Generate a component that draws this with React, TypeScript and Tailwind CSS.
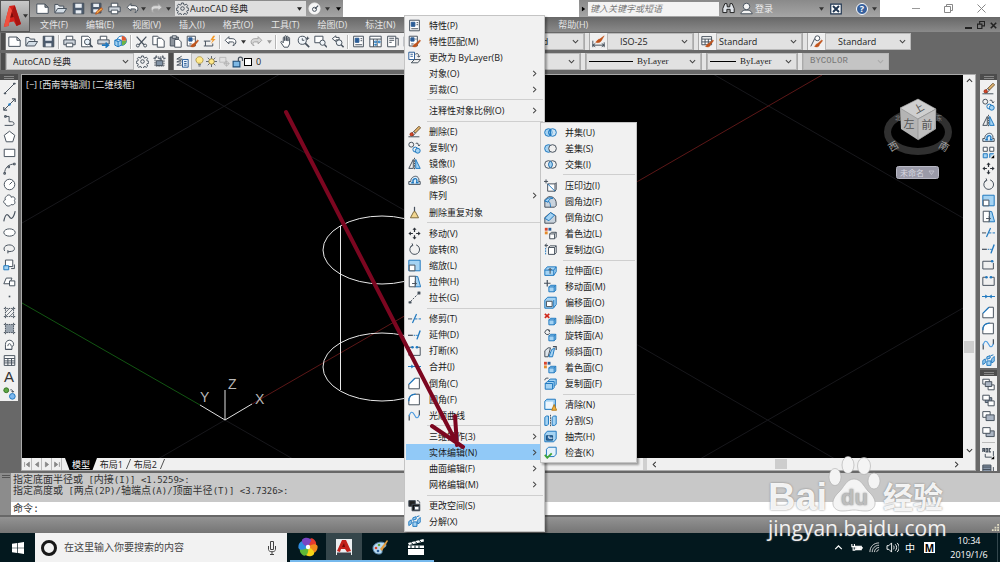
import { Fragment, type ReactNode } from "react";
import { clsx } from "clsx";

const BLUE = "#1f78bf";
const SKY = "#a5d3f3";
const INK = "#46505c";
const RUST = "#c1541c";

const solid = (
    <path
        d="M6 8.5 8 6.5h6.5v6l-2 2H6zM6 8.5h6.5v6M12.5 8.5l2-2"
        fill={SKY}
        stroke={BLUE}
    />
);

const page = (
    <>
        <path d="M2 1.5h12v13H2z" fill="#fff" />
        <path d="M4 4h4.500v5H4z" fill="#2b5d96" stroke="#2b5d96" />
        <path d="M10.500 4.500h2M10.500 7h2M4 12h8.500" />
    </>
);

const brush = (
    <path
        d="m14.500 6-5 4.500c-2 0-2 2-4 3.500 3 1.500 6 .5 6-2L15.500 7z"
        fill={RUST}
        stroke={RUST}
        strokeWidth="0.6"
    />
);

const icons: Record<string, ReactNode> = {
    newFile: <path d="M1 2.500h10l4 4v7.500H1zM11 2.500v4h4" fill="#fff" />,
    open: (
        <>
            <path d="M1 13V3h4l1.500 2H12v3" fill="#e8edf2" />
            <path d="M1 13.500 4.500 8H15.500L12 13.500z" fill="#d3dde6" />
        </>
    ),
    save: (
        <>
            <path d="M1.500 1.500h13v13h-13z" fill="#4c5b6e" />
            <path d="M4 2h8v5H4zM4.500 10h7v4h-7z" fill="#e9eef4" stroke="none" />
        </>
    ),
    saveAs: (
        <>
            <path d="M1.500 1.500h12v12h-12z" fill="#4c5b6e" />
            <path d="M4 2h7v4H4zM4 9h6v4H4z" fill="#e9eef4" stroke="none" />
            <path d="m7 15 1-3 6-5 1.500 2-6 5z" fill="#f2b24b" stroke={RUST} />
        </>
    ),
    print: (
        <>
            <path d="M4 6V1.500h8V6" fill="#fff" />
            <path d="M1 6h14v6H1z" fill="#cfd5dc" />
            <path d="M4 10h8v4.500H4z" fill="#fff" />
        </>
    ),
    preview: (
        <>
            <path d="M2 1.500h8l3 3v10H2z" fill="#fff" />
            <circle cx="9" cy="8.500" r="3.500" fill="#e9f3fb" />
            <path d="m11.500 11 4 4" strokeWidth="1.8" />
        </>
    ),
    publish: (
        <>
            <path d="M4 6V1.500h8V6" fill="#fff" />
            <path d="M1 6h14v5H1z" fill="#cfd5dc" />
            <path d="M6 12.500h7M10.500 9.500l3.500 3-3.500 3" stroke={BLUE} strokeWidth="2" />
        </>
    ),
    globe: (
        <>
            <circle cx="9.500" cy="7" r="5.800" fill="#fff" stroke={BLUE} />
            <path d="M9.500 7V1.200A5.800 5.800 0 0 1 15.300 7z" fill="#e05a33" stroke="none" />
            <path d="M9.500 7h5.800a5.800 5.800 0 0 1-5.800 5.800z" fill="#6bb445" stroke="none" />
            <path d="M1 6.500 5 5l4 1.500v6L5 14.500l-4-2zM1 6.500 5 8l4-1.500M5 8v6.500" fill={SKY} stroke={BLUE} />
        </>
    ),
    cut: (
        <>
            <path d="M2 2l9 10M14 2 5 12" strokeWidth="1.5" />
            <circle cx="3.500" cy="13" r="1.800" />
            <circle cx="12.500" cy="13" r="1.800" />
        </>
    ),
    copyDoc: (
        <>
            <path d="M1 1.500h6l2.500 2.500v8H1z" fill="#fff" />
            <path d="M6.500 4h5L15 7v8H6.500z" fill="#fff" />
        </>
    ),
    paste: (
        <>
            <path d="M1.500 2.500h10v11h-10z" fill="#8d949d" />
            <path d="M4 1h5v3H4z" fill="#d9dde1" />
            <path d="M7 5.500h5l3 3v6.500H7z" fill="#fff" />
        </>
    ),
    matchProps: (
        <>
            <path d="M1.500 1.500h10v12h-10z" fill="#fff" />
            <path d="M3.500 3.500h4v4h-4z" fill="#2b5d96" stroke="#2b5d96" />
            <path d="M9 5h1.500M4 11h3" />
            {brush}
        </>
    ),
    blockEdit: (
        <>
            <path d="M1 7.500h8M3 7.500v6h9v-3M1 13.500h2" />
            <path d="M12.500 1 9 6.500h3L9.500 11 15.500 5h-3L15 1z" fill="#f39a2b" stroke="none" />
        </>
    ),
    undo: <path d="m6 2-4.500 4.500L6 11V8.500h4.500c2.500 0 2.500 3 .5 4.500 5-1 5-8.500-1-8.500H6z" fill="#fff" />,
    redo: (
        <path
            d="m10 2 4.500 4.500L10 11V8.500H5.500c-2.500 0-2.500 3-.5 4.500C0 12 0 4.500 6 4.500h4z"
            fill="#d8d8d8"
            stroke="#a3a3a3"
        />
    ),
    pan: (
        <path
            d="M5 15 1 9c0-1.500 1.500-1.500 3 .5V3.500c0-1.500 1.800-1.500 1.800 0V7 2c0-1.500 2-1.500 2 0v5-4.500c0-1.500 2-1.500 2 0v5-3.500c0-1.500 2-1.500 2 0V11l-2 4z"
            fill="#fff"
        />
    ),
    zoomLive: (
        <>
            <circle cx="6.500" cy="6.500" r="5" fill="#f2f6fa" />
            <path d="m10 10 5 5" strokeWidth="2" />
            <path d="M6.500 4v2.500H9M13 2v4M11 4h4" />
        </>
    ),
    zoomWindow: (
        <>
            <path d="M1 1.500h10v8H1z" fill="#fff" />
            <circle cx="10.500" cy="9.500" r="3.200" fill="#f2f6fa" />
            <path d="m13 12 3 3" strokeWidth="1.800" />
        </>
    ),
    zoomPrev: (
        <>
            <path d="M6 1 1.500 4.500 6 8V6h4V3H6z" fill="#fff" />
            <circle cx="10" cy="9.500" r="3.500" fill="#f2f6fa" />
            <path d="m12.500 12 3 3" strokeWidth="1.800" />
        </>
    ),
    properties: page,
    designCenter: (
        <>
            <path d="M1 1.500h14v13H1zM1 5h14M5.500 5v9.500M10 5v9.500" fill="#fff" />
            <path d="M7 7.500h2v2H7zM11.500 7.500h2v2h-2zM7 11.500h2v1H7z" stroke={BLUE} />
        </>
    ),
    palettes: (
        <>
            <path d="M2 1.500h10v13H2zM12 4l3 0v9" fill="#fff" />
            <path d="M4 4h6M4 6.500h6M4 9h3" />
        </>
    ),
    gear: (
        <>
            <circle cx="8" cy="8" r="2.200" />
            <path d="M6.800 1.200h2.400l.4 2 1.300.6 1.800-1.200 1.600 1.700-1.100 1.700.5 1.300 2.100.5v2.300l-2 .4-.6 1.400 1.200 1.700-1.700 1.600-1.700-1.100-1.400.5-.5 2H6.900l-.5-2-1.300-.5-1.700 1.100-1.700-1.600 1.100-1.700-.6-1.400-1.900-.4V7.800l2-.5.5-1.300-1.100-1.700 1.600-1.700 1.800 1.200 1.300-.6z" />
        </>
    ),
    workspace: (
        <>
            <path d="M2.500 2.500h11v11h-11z" strokeDasharray="2 1" />
            <path d="M4 7h8v6H4zM6 4h4v3" fill="#8394a6" />
            <path d="M.5 4h3M4 .5v3M12 .5v3M13 4h2.500" />
        </>
    ),
    layers: (
        <>
            <path d="M7 1.500 1 5h7M7 6 1 8.500h6M6 10l-5 2.500h6" />
            <path d="M8 5.500h7V15H8zM10 8h3M10 10.500h3M10 12.500h3" fill="#e4eefa" stroke="#2b5d96" />
        </>
    ),
    bulb: (
        <>
            <path d="M5.500 10.500C0 6 4 1 8 1s8 5 2.500 9.500z" fill="#ffe98a" stroke="#a98f3a" />
            <path d="M6 12.500h4M6.500 14.500h3" />
        </>
    ),
    sun: (
        <>
            <path d="M8 0v16M0 8h16M2.500 2.500l11 11M13.500 2.500l-11 11" />
            <circle cx="8" cy="8" r="4" fill="#ffe98a" stroke="#8d7a37" />
        </>
    ),
    vpFreeze: (
        <g stroke="#b4b4b4">
            <path d="M1 2h9v7H1z" />
            <circle cx="11" cy="11" r="3" />
            <path d="M11 6.500v9M6.500 11h9" />
        </g>
    ),
    unlock: (
        <>
            <path d="M1.500 7h9v7.500h-9z" fill="#7db8e4" stroke="#1d4e79" strokeWidth="1.500" />
            <path d="M8.500 7V4c0-3.500 5.500-3.500 5.500 0v2.500" strokeWidth="1.600" />
        </>
    ),
    dimStyle: (
        <>
            <path d="M1 7v8M15 9v6M1 12.500h14M4 10.500l-3 2 3 2M12 10.500l3 2-3 2" />
            <path d="M15 1 9.500 5c-2 0-3 2-5 4 3 1 6 0 7-2z" fill={RUST} stroke={RUST} strokeWidth="0.6" />
        </>
    ),
    tableStyle: (
        <>
            <path d="M1 2h12v10H1zM1 5h12M1 8.500h12M5 5v7M9 5v7" fill="#fff" />
            {brush}
        </>
    ),
    leaderStyle: (
        <>
            <path d="M1 14 6 4" />
            <circle cx="9" cy="4" r="3" fill="#fff" />
            {brush}
        </>
    ),
    toByLayer: (
        <>
            <path d="M1 1.500h7v9H1zM3 4h3M3 6.500h3" fill="#fff" stroke="#2b5d96" />
            <path d="M9 4c3-2 4.500 0 4 3M11.500 6l1.500 1.500L15 6M4 14.500l4-4h7.500l-3.500 4z" />
        </>
    ),
    erase: (
        <>
            <path d="m7 8 6.500-6.500 2 2L9 10z" fill="#e3b56f" stroke="#6f5330" />
            <path d="m7 8-3 3 2 2.500 3-3.500z" fill="#fff" />
            <circle cx="4.500" cy="11.500" r="2" fill="#d9462a" stroke="#9f3218" />
            <path d="M.5 14.500H14" />
        </>
    ),
    copy: (
        <>
            <circle cx="4" cy="4.500" r="3" />
            <circle cx="9" cy="10.500" r="3" stroke={BLUE} />
            <circle cx="12" cy="12" r="3" stroke={BLUE} fill={SKY} />
            <path d="M9.500 3c2-1 4 0 4 3M12 4.500 13.500 6 15 4.500" />
        </>
    ),
    mirror: (
        <>
            <path d="M6.500 3v11H1z" />
            <path d="M9.500 3v11H15z" fill={SKY} stroke={BLUE} />
            <path d="M8 1v14.500" strokeDasharray="2 1" />
        </>
    ),
    offset: (
        <>
            <path d="M1 14v-3.500h2.500c-1-6 9-10 10-2 0 1.500-.5 2-.5 2h2V14z" fill="#dcecf8" />
            <path d="M4 12h2.500c-2-5 4-7 4.500-3 0 1.500-.5 3-.5 3H13" stroke={BLUE} strokeWidth="1.600" />
        </>
    ),
    array: (
        <>
            <path d="M1.500 1.500h5v5h-5zM9.500 1.500h5v5h-5z" stroke={INK} fill="#fff" />
            <path d="M1.500 9.500h5v5h-5zM9.500 14.500v-5h5" stroke={BLUE} fill={SKY} />
            <path d="M11 15h4v-4z" fill="#000" stroke="none" />
        </>
    ),
    dedupe: (
        <>
            <path d="M8 1v6" strokeWidth="1.500" />
            <path d="m7 7-4 7.500h10L9 7z" fill="#f3d791" stroke="#7d6a3c" />
        </>
    ),
    move: (
        <>
            <path d="M8 2v4M8 10v4M2 8h4M10 8h4" stroke="#2c3138" strokeWidth="1.500" />
            <path
                d="M5.500 3.500 8 .500l2.500 3zM5.500 12.500l2.500 3 2.500-3zM3.500 5.500l-3 2.500 3 2.500zM12.500 5.500l3 2.500-3 2.500z"
                fill="#2c3138"
                stroke="none"
            />
        </>
    ),
    rotate: (
        <>
            <path d="M5.500 2.700a6 6 0 1 0 4.500-.400" />
            <path d="m5 .500 1 2.500-3 1.500" />
        </>
    ),
    scale: (
        <>
            <path d="M1 1.500h14v13H1z" fill={SKY} stroke={BLUE} />
            <path d="M1.500 7.500h7v7h-7z" fill="#fff" />
        </>
    ),
    stretch: (
        <>
            <path d="M9 1.500 12 2l3.500 12.500H8z" fill={SKY} stroke={BLUE} />
            <path d="M1.500 1.500H9v13H1.500zM5 10.500h5M8 8.500l2.500 2L8 12.500" fill="#fff" />
        </>
    ),
    lengthen: (
        <>
            <path d="m3 13 9-9" strokeDasharray="2.500 1.500" />
            <path d="M1 13h3v2H1zM12 1h3v3h-3z" fill={INK} strokeWidth="0.5" />
        </>
    ),
    trim: (
        <>
            <path d="M0 8.500h5" />
            <path d="M8.500 8.500H16" stroke={BLUE} strokeDasharray="3 1.500" />
            <path d="m5.500 13.500 5-11" stroke={BLUE} strokeWidth="1.500" />
        </>
    ),
    extend: (
        <>
            <path d="M0 9h6" strokeWidth="1.500" />
            <path d="M7 9h5" stroke={BLUE} strokeDasharray="2 1" />
            <path d="m11 14 4-11" stroke={BLUE} strokeWidth="1.700" />
        </>
    ),
    breakPoint: (
        <>
            <path d="M12 4H1v9.500h13V6" />
            <circle cx="12.500" cy="4" r="1.600" fill={BLUE} stroke="none" />
        </>
    ),
    breakLine: (
        <>
            <path d="M5 4H1v10h14V4h-3" />
            <circle cx="5.500" cy="4" r="1.600" fill={BLUE} stroke="none" />
            <circle cx="11" cy="4" r="1.600" fill={BLUE} stroke="none" />
        </>
    ),
    join: (
        <>
            <path d="M0 8h16" stroke={BLUE} />
            <path d="M4 5.500 7.500 8 4 10.500zM12 5.500 8.500 8l3.500 2.500z" fill={BLUE} stroke="none" />
        </>
    ),
    chamfer: (
        <>
            <path d="M1 14.500V9l7.500-7.500H14v13z" fill="#fff" />
            <path d="M1 9 8.500 1.500" stroke={BLUE} strokeWidth="1.500" />
        </>
    ),
    fillet: (
        <>
            <path d="M1 14.500V10C1 4.500 4 1.500 9.500 1.500H14v13z" fill="#fff" />
            <path d="M1 10C1 4.500 4 1.500 9.500 1.500" stroke={BLUE} strokeWidth="1.500" />
        </>
    ),
    blend: (
        <>
            <path d="M1.500 14V7M14 8V1.500" strokeWidth="1.500" />
            <path d="M1.500 9C3 2 6 3 8 7.500s4 4.500 6-.5" stroke="#4c9be0" strokeWidth="1.400" />
        </>
    ),
    explode: (
        <path
            d="m1 8 3-2v5l-3 2zM6 8.500h5V14H6zM6 3.500l4-1.500v3L6 6.500zM12 6l3-3v6l-3 2zM11 2l3-1"
            fill={SKY}
            stroke={BLUE}
        />
    ),
    changeSpace: (
        <>
            <path d="M1 2h8v7H1z" fill="#222" />
            <path d="M5 6.500h9.500v8H5z" fill="#111" />
            <path d="M8 9h5.500v4.500H8z" fill="#fff" />
            <path d="M11 2c2.500 0 3.500 1 3.500 3.500" />
        </>
    ),
    union: (
        <>
            <circle cx="5.500" cy="8" r="4.700" fill={SKY} stroke={BLUE} />
            <circle cx="10.500" cy="8" r="4.700" fill={SKY} fillOpacity="0.5" stroke={BLUE} />
            <path d="M8 4v8c-3-2-3-6 0-8z" stroke={BLUE} />
        </>
    ),
    subtract: (
        <>
            <circle cx="5.500" cy="8" r="4.700" fill={SKY} stroke={BLUE} />
            <circle cx="10.500" cy="8" r="4.700" fill="#f0f0f0" />
        </>
    ),
    intersect: (
        <>
            <circle cx="5.500" cy="8" r="4.700" />
            <circle cx="10.500" cy="8" r="4.700" />
            <path d="M8 4c3 2 3 6 0 8-3-2-3-6 0-8z" fill={SKY} stroke={BLUE} />
        </>
    ),
    imprint: (
        <>
            <path d="M4.500 6h9v9h-9zM13.500 6 15 4.500V13l-1.500 2" fill="#fff" />
            <path d="m4.500 6 9 9" stroke={BLUE} />
            <path d="M2.500.5v5M0 3h5" />
        </>
    ),
    filletEdge: (
        <>
            <path d="M1 6 4 3c5-3 11 1 11 7v3l-2 2H1z" fill="#c9d3dd" />
            <path d="M1 8c6-3 7 3 7 7" stroke={BLUE} />
            <path d="M1 7c4-4 7-4 10-3-4 0-5 2-6 5z" fill={SKY} stroke={BLUE} />
        </>
    ),
    chamferEdge: (
        <>
            <path d="M1 8 8 2l6.500 4v7l-2 2H1z" fill="#c9d3dd" />
            <path d="m1 9 7-7 5 3-7 7z" fill={SKY} stroke={BLUE} />
        </>
    ),
    colorEdge: (
        <>
            <path d="M1 1h3.500v3.500H1z" fill="#d8432b" stroke="none" />
            <path d="M5.500 1H9v3.500H5.500z" fill="#2b5d96" stroke="none" />
            <path d="M1 5.500h3.500V9H1z" fill="#e38b2c" stroke="none" />
            <path d="M7 8.500 9 6.500h6v6l-2 2H7zM7 8.500h6v6M13 8.500l2-2" fill="#fff" />
        </>
    ),
    copyEdge: (
        <>
            <path d="M5.500 5.500 7.500 3.500H15V12l-2 2H5.500zM5.500 5.500H13V14M13 5.500l2-2" fill="#fff" />
            <path d="M2 6v9" stroke={BLUE} strokeDasharray="2 1" />
            <path d="M1 3h4M3.500 1 1 3l2.500 2" />
        </>
    ),
    extrudeFace: (
        <>
            <path d="M1 7 4 3.500h11v6L12 14H1z" fill={SKY} stroke={BLUE} />
            <path d="M1 7.500h11V14M12 7.500l3-4" stroke={BLUE} />
            <path d="M7.500 12V5.500M5.500 7.500l2-2 2 2" />
        </>
    ),
    moveFace: (
        <>
            {solid}
            <path d="M4 0v8M0 4h8" strokeWidth="1.500" />
        </>
    ),
    offsetFace: (
        <>
            <path d="m1 5 3.500-3.500H15v9L11.500 15H1z" fill={SKY} stroke={BLUE} />
            <path d="M3 6.500h7V13H3z" fill="#fff" />
            <path d="M12 5v9" stroke={BLUE} />
        </>
    ),
    deleteFace: (
        <>
            {solid}
            <path d="m1 1 5.500 5M6.500 1 1 6" stroke="#d0281b" strokeWidth="2" />
        </>
    ),
    rotateFace: (
        <>
            {solid}
            <path d="M6.500 2A3 3 0 1 0 7 5M4.500 1l2.500.500-.500 2.500" />
        </>
    ),
    taperFace: (
        <>
            <path d="M1 14.500V7l4-3.500h3L5 14.500z" fill="#dfe5ea" />
            <path d="m6 14.500 3.500-9L13 4l-2.500 10.500z" fill={SKY} stroke={BLUE} />
            <path d="M11 2h4v4" strokeWidth="1.500" />
        </>
    ),
    colorFace: (
        <>
            {solid}
            <path d="M0 1h3.500v3.500H0z" fill="#d8432b" stroke="none" />
            <path d="M4.500 1H8v3.500H4.500z" fill="#2b5d96" stroke="none" />
            <path d="M0 5.500h3.500V9H0z" fill="#e38b2c" stroke="none" />
        </>
    ),
    copyFace: (
        <>
            <path d="M5 5 7.500 2.500H15V9l-2.500 2.500" fill={SKY} stroke={BLUE} />
            <path d="M1.500 8h9v7h-9zM1.500 8 4 5.500h8.500V13l-2 2" fill={SKY} stroke={BLUE} />
            <path d="M1 4c0-2.500 2-3 4.500-2.500" />
        </>
    ),
    clean: (
        <>
            <path d="M1 4 3.500 1.500H14v10L11.500 14H1z" fill={SKY} stroke={BLUE} />
            <path d="M2 4.500h9V13H2z" fill="#eef6fc" stroke="none" />
            <path d="m12.500 8-3 7h6z" fill="#f0b341" stroke="#b77a18" />
        </>
    ),
    separate: (
        <>
            <path d="M1 4 3 2.500h2.500v10L4 14H1zM10 4l2-1.500h3v10L13 14h-3z" fill={SKY} stroke={BLUE} />
            <path d="M8 1v14.500" strokeDasharray="2 1" />
        </>
    ),
    shell: (
        <>
            <path d="m1 5 3-3.500h11V11l-3 3.500H1z" fill={SKY} stroke={BLUE} />
            <path d="M3 7h7.500v5.500H3z" fill="#2b6aa5" stroke="#1d4e79" />
            <path d="M6 7v3h4.500" stroke="#fff" />
        </>
    ),
    check: (
        <>
            <path d="m3 4 2.500-2.500H15V10l-2.500 3H3z" fill="#e4f1fb" stroke={BLUE} />
            <path d="m1 11 3 3.500L9.500 9" stroke="#3fa535" strokeWidth="2.200" />
        </>
    ),
    line: (
        <>
            <path d="m2.500 13.500 11-11" />
            <path d="M1.500 13.500h2v1h-2zM13 1.500h2v1h-2z" fill={INK} />
        </>
    ),
    xline: (
        <>
            <path d="m1 15 14-14" />
            <path d="M1 15v-4M1 15h4M15 1v4M15 1h-4" strokeWidth="1.500" />
            <circle cx="8" cy="8" r="1.500" fill={BLUE} stroke="none" />
        </>
    ),
    polyline: <path d="M3 3h4.500v6.500h3c4 0 4 4.500.500 4.500H2M2 2h2v2H2z" />,
    polygon: <path d="m8 1.500 6.500 5-2.500 8H4l-2.500-8z" fill="#fff" />,
    rectangle: <path d="M1.500 4h13v9h-13z" fill="#fff" />,
    arc: <path d="M2 14C2 7 7 2.500 14 2.500M1 13h2v2H1zM6 5h2v2H6zM13 1.500h2v2h-2z" />,
    circle: (
        <>
            <circle cx="8" cy="8" r="6.500" fill="#fff" />
            <path d="m8 8 3.500-3.500" />
        </>
    ),
    cloud: <path d="M4 3c2-3 6-2 6 1 4-2 6 2 4 4 2 4-1 6-4 5-2 3-7 2-7-1-3-1-3-4 0-5-1-2 0-3 1-4z" fill="#fff" />,
    spline: <path d="M1 14C3 3 6 5 8 8.500s5 2 7-7" strokeWidth="1.400" />,
    ellipse: <ellipse cx="8" cy="8" rx="7" ry="4.500" fill="#fff" />,
    ellipseArc: <path d="M2 11C-1 5 6 2.500 10.500 4s5 7 0 7.500L6 12M6 10v4" />,
    insertBlock: (
        <>
            <path d="M3 2.500h9v8H3z" fill="#fff" />
            <path d="M1 9.500h6v5H1z" fill={SKY} stroke={BLUE} />
            <path d="M14 8v5h-4" />
        </>
    ),
    makeBlock: (
        <>
            <path d="m1 12 3-7h7l-3 7z" fill="#fff" />
            <path d="M8 8.500h6.500v6H8z" fill="#fff" />
        </>
    ),
    point: <path d="M7 7h2v2H7z" fill={INK} stroke="none" />,
    hatch: (
        <>
            <path d="M1 3h14M1 13h14M3 1v14M13 1v14" strokeDasharray="2 1" />
            <path d="M3 8l5-5M3 13 13 3M8 13l5-5" strokeWidth="0.900" />
        </>
    ),
    gradient: (
        <>
            <path d="M3 3h10v10H3z" fill="#9ba5b0" stroke="none" />
            <path d="M1 3h14M1 13h14M3 1v14M13 1v14" strokeDasharray="2 1" />
        </>
    ),
    region: <path d="M3 14V8c0-7 10-7 10 0 0 2-1 2-2 2v4zM3 14h8M6 10c0-4 4-4 4 0" fill="#fff" />,
    table: <path d="M1.500 2h13v12h-13zM1.500 5.500h13M1.500 8.500h13M1.500 11h13M6 5.500V14M10.500 5.500V14" fill="#fff" />,
    addSelected: (
        <>
            <circle cx="4" cy="4" r="3" fill="#5ea744" stroke="#397526" />
            <circle cx="11.500" cy="11.500" r="3.500" fill="#7db8ef" stroke={BLUE} />
            <path d="M9 3.500c2-.500 3 .500 3 3M10.500 5l1.500 1.500L13.500 5" />
        </>
    ),
    orderFront: (
        <>
            <path d="M1 1.500h8v6H1zM7.500 8.500h7.500v6H7.500z" fill="#fff" />
            <path d="M4 4.500h8v6H4z" fill="#aab4c2" />
        </>
    ),
    orderBack: (
        <>
            <path d="M4 4.500h8v6H4z" fill="#8593a5" />
            <path d="M1 1.500h8v6H1zM7.500 8.500h7.500v6H7.500z" fill="#fff" />
        </>
    ),
    orderAbove: (
        <>
            <path d="M1 2h9v7H1z" fill="#fff" />
            <path d="M5 6h10v7H5z" fill="#aab4c2" />
        </>
    ),
    orderUnder: (
        <>
            <path d="M5 6h10v7H5z" fill="#aab4c2" />
            <path d="M1 2h9v7H1z" fill="#fff" />
        </>
    ),
    orderText: (
        <>
            <path d="M1 6V2h2v4M1 4h2M5 2h2v4H5zM11 2H9v4h2" strokeWidth="1.400" />
            <path d="M4 8.500v4h8M14 5v6" />
            <path d="M11 15h4v-4z" fill="#000" stroke="none" />
        </>
    ),
    orderHatch: (
        <>
            <path d="M1 2.500h10v8H1z" fill="#8593a5" />
            <path d="M1 5h10M1 8h10M14 5v8M8 13.500h6" />
        </>
    ),
    binoculars: (
        <path d="M1 13V8l2.500-6H6l.500 4h3l.500-4h2.500L15 8v5h-5V9H6v4z" fill="#dfe3e8" stroke="#222" />
    ),
    user: (
        <>
            <circle cx="8" cy="5.500" r="4" fill="#f5f5f5" />
            <path d="M1 14.500c1-4 4-4 5-4.500h4c1 .500 4 .500 5 4.500z" fill="#f5f5f5" />
        </>
    ),
    exchange: (
        <>
            <path d="M1 1.500h14v13H1z" fill="#fff" stroke="#1f3550" strokeWidth="1.600" />
            <path d="m4 4 8 8M12 4l-8 8" stroke="#1f3550" strokeWidth="2.600" />
        </>
    ),
    gauge: (
        <>
            <circle cx="8" cy="8" r="6.800" fill="#f6f6f6" stroke="#f6f6f6" />
            <circle cx="8" cy="9" r="2.500" />
            <path d="m8.500 8.500 4-4" strokeWidth="1.500" />
        </>
    ),
};

interface IconProps {
    name: string;
    className?: string;
}

function Icon({ name, className = "size-[13px]" }: IconProps) {
    return (
        <svg
            viewBox="0 0 16 16"
            className={clsx("shrink-0", className)}
            fill="none"
            stroke={INK}
            strokeWidth="1.200"
            aria-hidden="true">
            {icons[name]}
        </svg>
    );
}

function Chevron({ className }: { className?: string }) {
    return (
        <svg viewBox="0 0 8 8" className={clsx("size-[7px] shrink-0", className)} fill="none" stroke="currentColor">
            <path d="m1 2.500 3 3 3-3" strokeWidth="1.200" />
        </svg>
    );
}

function Caret({ className }: { className?: string }) {
    return (
        <svg viewBox="0 0 6 4" className={clsx("h-[4px] w-[5px] shrink-0 fill-current", className)}>
            <path d="M0 0h6L3 4z" />
        </svg>
    );
}

function Divider() {
    return <span className="mx-px h-3.5 w-0.5 shrink-0 border-r border-white bg-[#b5b5b5]" />;
}

function Grip({ dark }: { dark?: boolean }) {
    return (
        <span
            className={clsx(
                "h-full w-[6px] shrink-0 border-x",
                dark ? "border-[#777] bg-[#4c4c4c]" : "border-[#aaa] bg-[#e4e4e4]"
            )}
        />
    );
}

function ToolButton({ name, label }: { name: string; label?: string }) {
    return (
        <button
            aria-label={label ?? name}
            className="flex h-4 w-[17px] shrink-0 items-center justify-center hover:bg-sky-100">
            <Icon name={name} />
        </button>
    );
}

interface ComboProps {
    label: string;
    value: string;
    className?: string;
    selectClass?: string;
    children?: ReactNode;
    disabled?: boolean;
}

function Combo({ label, value, className, selectClass, children, disabled }: ComboProps) {
    return (
        <label
            className={clsx(
                "relative flex h-full shrink-0 items-center border border-[#b9b9b9]",
                disabled ? "bg-[#c4c4c4] text-[#777]" : "bg-[#e1e1e1] text-[#222]",
                className
            )}>
            {children}
            <select
                aria-label={label}
                disabled={disabled}
                className={clsx(
                    "h-full min-w-0 flex-1 appearance-none bg-transparent text-[9px] leading-none",
                    selectClass
                )}>
                <option>{value}</option>
            </select>
            <Chevron className={clsx("absolute right-1", disabled ? "text-[#aaa]" : "text-[#444]")} />
        </label>
    );
}

const menuTitles = [
    "文件(F)",
    "编辑(E)",
    "视图(V)",
    "插入(I)",
    "格式(O)",
    "工具(T)",
    "绘图(D)",
    "标注(N)",
];

function AppHeader() {
    return (
        <header className="flex shrink-0">
            <button
                aria-label="应用程序菜单"
                className="flex h-8 w-[30px] shrink-0 items-center gap-0.5 border border-[#555] bg-gradient-to-b from-[#c9c9c9] to-[#8a8a8a] pl-0.5 text-[#333]">
                <svg viewBox="0 0 20 26" className="h-[24px] w-[18px]">
                    <path d="M7 2 13 1l7 21-5 2-3-5-5 1-1 4-5 1z" fill="#d5221c" />
                    <path d="m7 2 3 5-3 13-1 4-5 1z" fill="#f0503f" />
                    <path d="m10 8 2 6-4 1z" fill="#7c0d0b" />
                    <path d="m13 1 7 21-5 2-5-17z" fill="#a81512" />
                </svg>
                <Caret />
            </button>
            <div className="min-w-0 flex-1">
                <div className="flex h-[17px] items-stretch bg-white">
                    <div className="flex w-[313px] shrink-0 items-center bg-gradient-to-b from-[#8a8a8a] to-[#a5a5a5] pl-[3px] text-[#333]">
                        {["newFile", "open", "save", "saveAs", "print", "undo"].map((n) => (
                            <button key={n} aria-label={n} className="flex w-[18px] justify-center">
                                <Icon name={n} />
                            </button>
                        ))}
                        <Caret />
                        <button aria-label="redo" className="flex w-[20px] justify-center">
                            <Icon name="redo" />
                        </button>
                        <Caret />
                        <label className="relative ml-1 flex h-[15px] w-[131px] items-center gap-px bg-[#dedede] px-px text-[#222]">
                            <Icon name="gear" />
                            <select
                                aria-label="工作空间"
                                className="h-full min-w-0 flex-1 appearance-none bg-transparent text-[9px] leading-none">
                                <option>AutoCAD 经典</option>
                            </select>
                            <Caret className="absolute right-1" />
                        </label>
                        <Icon name="gauge" className="ml-0.5 size-[13px]" />
                        <Caret className="ml-1" />
                        <Caret className="ml-1.5 text-black" />
                    </div>
                    <div className="ml-auto flex w-[301px] shrink-0 items-center bg-gradient-to-b from-[#8a8a8a] to-[#a5a5a5] text-[#333]">
                        <Caret className="mx-0.5 -rotate-90 text-black" />
                        <input
                            aria-label="搜索帮助"
                            placeholder="键入关键字或短语"
                            className="h-[14px] w-[131px] bg-[#f3f3f3] px-0.5 text-[9px] italic leading-none placeholder:text-[#777]"
                        />
                        <button aria-label="搜索" className="ml-[3px]">
                            <Icon name="binoculars" />
                        </button>
                        <button className="ml-[5px] flex items-center gap-0.5 text-[9px] leading-none text-[#eee]">
                            <Icon name="user" />
                            登录
                        </button>
                        <Caret className="ml-auto" />
                        <Icon name="exchange" className="ml-[6px] size-[12px]" />
                        <button
                            aria-label="帮助"
                            className="ml-[14px] flex size-[12px] items-center justify-center rounded-full border border-white bg-[#36609d] text-[9px] font-bold leading-none text-white">
                            ?
                        </button>
                        <Caret className="mr-[3px] ml-1" />
                    </div>
                    <div className="flex w-[120px] shrink-0 items-center pl-[19px] text-[#888]">
                        <button aria-label="最小化" className="flex h-full w-[33px] items-center justify-center">
                            <span className="h-px w-2 bg-[#999]" />
                        </button>
                        <button aria-label="还原" className="flex h-full w-[33px] items-center justify-center">
                            <svg viewBox="0 0 9 9" className="size-[9px]" fill="none" stroke="currentColor">
                                <path d="M.5 2.500h6v6h-6zM2.500 2.500v-2h6v6h-2" />
                            </svg>
                        </button>
                        <button aria-label="关闭" className="flex h-full w-[33px] items-center justify-center">
                            <svg viewBox="0 0 9 9" className="size-[9px]" fill="none" stroke="currentColor">
                                <path d="m.5.5 8 8M8.500.500l-8 8" />
                            </svg>
                        </button>
                    </div>
                </div>
                <nav className="flex h-[15px] items-center gap-[18px] bg-gradient-to-b from-[#686868] to-[#8a8a8a] pl-[10px] text-[9px] leading-none text-[#e6e6e6]">
                    {menuTitles.map((t) => (
                        <button key={t} className="shrink-0">
                            {t}
                        </button>
                    ))}
                    <button className="ml-[145px] shrink-0">帮助(H)</button>
                    <div className="ml-auto flex items-end gap-[5px] pr-[3px] text-[#222]">
                        <button aria-label="最小化图形" className="h-0.5 w-[7px] bg-[#222]" />
                        <button aria-label="还原图形">
                            <svg viewBox="0 0 9 9" className="size-[8px]" fill="none" stroke="currentColor" strokeWidth="1.300">
                                <path d="M.5 3.500h5v5h-5zM3 3V.500h5.500v5H6" />
                            </svg>
                        </button>
                        <button aria-label="关闭图形">
                            <svg viewBox="0 0 9 9" className="size-[7px]" fill="none" stroke="currentColor" strokeWidth="2">
                                <path d="m1 1 7 7M8 1 1 8" />
                            </svg>
                        </button>
                    </div>
                </nav>
            </div>
        </header>
    );
}

const standardTools = [
    ["newFile", "open", "save"],
    ["print", "preview", "publish", "globe"],
    ["cut", "copyDoc", "paste", "matchProps", "blockEdit"],
    ["undo", "redo"],
    ["pan", "zoomLive", "zoomWindow", "zoomPrev"],
    ["properties", "designCenter", "palettes", "table"],
];

function Toolbars() {
    return (
        <div className="flex shrink-0 flex-col gap-[3px] overflow-hidden bg-[#686868] pt-px pb-1">
            <div className="flex h-[17px]">
                <div className="flex w-[584px] shrink-0 items-center bg-[#f0f0f0]">
                    <Grip dark />
                    {standardTools.map((group, i) => (
                        <Fragment key={i}>
                            {i > 0 && <Divider />}
                            {group.map((n) => (
                                <Fragment key={n}>
                                    <ToolButton name={n} />
                                    {(n === "undo" || n === "redo") && (
                                        <Caret className={clsx("mx-0.5", n === "undo" ? "text-[#333]" : "text-[#999]")} />
                                    )}
                                </Fragment>
                            ))}
                        </Fragment>
                    ))}
                    <Combo label="文字样式" value="Standard" className="ml-auto w-[86px]" selectClass="pl-[11px]" />
                </div>
                {[
                    ["dimStyle", "标注样式", "ISO-25", "pl-3"],
                    ["tableStyle", "表格样式", "Standard", "pl-0.5"],
                    ["leaderStyle", "多重引线样式", "Standard", "pl-3"],
                ].map(([icon, label, value, pad]) => (
                    <div key={icon} className="flex shrink-0 items-center bg-[#f0f0f0]">
                        <Grip />
                        <ToolButton name={icon} />
                        <Combo label={label} value={value} className="w-[86px]" selectClass={pad} />
                    </div>
                ))}
            </div>
            <div className="flex h-[17px]">
                <div className="flex shrink-0 items-center bg-[#f0f0f0]">
                    <Grip dark />
                    <Combo label="工作空间" value="AutoCAD 经典" className="w-[128px]" selectClass="pl-1.5" />
                    <ToolButton name="gear" />
                    <ToolButton name="workspace" />
                </div>
                <div className="flex w-[412px] shrink-0 items-center bg-[#f0f0f0]">
                    <Grip dark />
                    <ToolButton name="layers" label="图层特性" />
                    <Combo label="图层" value="0" className="w-[240px]" selectClass="pl-1">
                        <Icon name="bulb" className="ml-0.5 size-[11px]" />
                        <Icon name="sun" className="ml-px size-[11px]" />
                        <Icon name="vpFreeze" className="ml-0.5 size-[11px]" />
                        <Icon name="unlock" className="ml-0.5 size-[12px]" />
                        <span className="size-[8px] border border-black bg-white" />
                    </Combo>
                    <Combo label="颜色" value="ByLayer" className="ml-auto w-[120px]" />
                </div>
                <div className="flex shrink-0 bg-[#f0f0f0] font-['Liberation_Serif','Noto_Sans_CJK_SC',serif]">
                    <Grip />
                    <Combo label="线型" value="ByLayer" className="w-[115px]" selectClass="pl-1">
                        <span className="ml-0.5 h-px w-[44px] bg-black" />
                    </Combo>
                    <Grip />
                    <Combo label="线宽" value="ByLayer" className="w-[90px]" selectClass="pl-1">
                        <span className="ml-0.5 h-px w-[26px] bg-black" />
                    </Combo>
                    <Grip />
                    <Combo
                        label="打印样式"
                        value="BYCOLOR"
                        className="w-[86px] font-['Liberation_Mono',monospace]"
                        selectClass="pl-1.5"
                        disabled
                    />
                </div>
            </div>
        </div>
    );
}

const drawTools = [
    "line",
    "xline",
    "polyline",
    "polygon",
    "rectangle",
    "arc",
    "circle",
    "cloud",
    "spline",
    "ellipse",
    "ellipseArc",
    "insertBlock",
    "makeBlock",
    "point",
    "hatch",
    "gradient",
    "region",
    "table",
];

const modifyTools = [
    "erase",
    "copy",
    "mirror",
    "offset",
    "array",
    "move",
    "rotate",
    "scale",
    "stretch",
    "trim",
    "extend",
    "breakPoint",
    "breakLine",
    "join",
    "chamfer",
    "fillet",
    "blend",
    "explode",
];

function BarHandle() {
    return (
        <div className="flex h-[6px] shrink-0 items-center justify-center bg-[#4c4c4c]">
            <span className="h-[3px] w-[10px] border-y border-[#888]" />
        </div>
    );
}

function ModelSpace() {
    return (
        <svg
            viewBox="22 75 941 384"
            preserveAspectRatio="xMinYMin slice"
            className="absolute inset-0 size-full font-['Liberation_Sans','Noto_Sans_CJK_SC',sans-serif]"
            fill="none"
            role="img"
            aria-label="模型空间">
            <g stroke="#17171b">
                <path d="M170 75 835 459M280 74 22 223M713 74l250 144M963 308 700 459M225 420l68 39M225 420l-67 39" />
            </g>
            <path d="M22 303 200 405" stroke="#125512" />
            <path d="M252 404 822 75" stroke="#5c1717" />
            <path d="M225 420v-30M225 420l27-16M225 420l-25-15" stroke="#e0e0e0" />
            <g fill="#b8b8b8" fontSize="14">
                <text x="200" y="402">Y</text>
                <text x="228" y="389">Z</text>
                <text x="255" y="404">X</text>
            </g>
            <g stroke="#e8e8e8">
                <ellipse cx="382" cy="250" rx="59" ry="34" />
                <ellipse cx="382" cy="367" rx="59" ry="34" />
                <path d="M340.500 226v164" />
            </g>
            <ellipse cx="918" cy="132" rx="30.500" ry="19.500" stroke="#303030" strokeWidth="7" />
            <path d="m900 108 18-9 18 10v20l-18 11-17-11z" fill="#b4b4b4" />
            <path d="m900 108 18-9 18 10-18 10z" fill="#cfcfcf" stroke="#888" strokeWidth="0.600" />
            <path d="m918 119 18-10-1 20-17 11z" fill="#bfbfbf" stroke="#888" strokeWidth="0.600" />
            <g fill="#555" fontSize="11" textAnchor="middle">
                <text x="919" y="112" fontSize="10" transform="rotate(-30 919 109)">上</text>
                <text x="909" y="128">左</text>
                <text x="927" y="129">前</text>
            </g>
            <g fill="#a0a0a0" fontSize="10" textAnchor="middle">
                <text x="893" y="150" transform="rotate(-30 893 146)">西</text>
                <text x="944" y="150" transform="rotate(30 944 146)">南</text>
            </g>
            <g fill="#8a8a8a" fontSize="6" textAnchor="middle">
                <text x="898" y="120">北</text>
                <text x="939" y="120">东</text>
            </g>
            <rect x="896.500" y="166.500" width="42" height="12" rx="2" fill="#9a9aa8" stroke="#b8b8c4" />
            <text x="900" y="176" fill="#d8d8e0" fontSize="8">未命名</text>
            <path d="M929 171h5l-2.500 3.500z" stroke="#c8c8d2" strokeWidth="0.800" />
        </svg>
    );
}

function LayoutTabs() {
    return (
        <div className="flex h-3 shrink-0 bg-[#f0f0f0] text-[9px] leading-none">
            {["M2 1v6M8 1 4 4l4 3z", "M7 1 3 4l4 3z", "M3 1l4 3-4 3z", "M8 1v6M2 1l4 3-4 3z"].map((d) => (
                <button key={d} aria-label="滚动选项卡" className="flex w-[10px] items-center justify-center border-r border-[#bbb]">
                    <svg viewBox="0 0 10 8" className="h-[7px] w-[8px]" fill="#888" stroke="#888">
                        <path d={d} />
                    </svg>
                </button>
            ))}
            <button className="ml-[3px] w-8 bg-black text-white [clip-path:polygon(0_0,100%_0,86%_100%,14%_100%)]">
                模型
            </button>
            {["布局1", "布局2"].map((t) => (
                <button key={t} className="flex w-[34px] items-center justify-end gap-[3px] text-[#222]">
                    {t}
                    <svg viewBox="0 0 6 12" className="h-3 w-[5px]" stroke="#333">
                        <path d="M5.500 0 .500 12" />
                    </svg>
                </button>
            ))}
            <div className="ml-auto flex w-[332px] items-center border-l-4 border-[#d0d0d0] pr-[15px] pl-1 text-[#333]">
                <Chevron className="rotate-90" />
                <span className="mr-auto ml-[117px] h-[10px] w-3 bg-[#cdcdcd]" />
                <Chevron className="-rotate-90" />
            </div>
        </div>
    );
}

function Workspace() {
    return (
        <main className="flex min-h-0 flex-1 bg-[#686868]">
            <div className="flex w-[18px] shrink-0 flex-col items-center self-start bg-[#f0f0f0]">
                <div className="w-full">
                    <BarHandle />
                </div>
                {drawTools.map((n) => (
                    <ToolButton key={n} name={n} />
                ))}
                <button className="h-[17px] font-['Liberation_Sans',sans-serif] text-[15px] leading-none text-[#333]">A</button>
                <ToolButton name="addSelected" />
            </div>
            <div className="ml-[3px] flex min-w-0 flex-1 flex-col border border-[#aaa]">
                <div className="flex min-h-0 flex-1">
                    <div className="relative min-w-0 flex-1 overflow-hidden bg-black">
                        <ModelSpace />
                        <p className="relative px-1 pt-1 text-[9px] leading-3 text-[#e4e4e4]">
                            [−] [西南等轴测] [二维线框]
                        </p>
                    </div>
                    <div className="flex w-3 shrink-0 flex-col items-center bg-[#f0f0f0] pt-0.5 pb-1 text-[#333]">
                        <Chevron className="rotate-180" />
                        <span className="mt-auto h-3 w-[10px] bg-[#cdcdcd]" />
                        <Chevron className="mt-[94px]" />
                    </div>
                </div>
                <LayoutTabs />
            </div>
            <div className="ml-1 flex w-[17px] shrink-0 flex-col overflow-hidden">
                <div className="shrink-0 bg-[#f0f0f0]">
                    <BarHandle />
                    {modifyTools.map((n) => (
                        <ToolButton key={n} name={n} />
                    ))}
                </div>
                <div className="mt-0.5 min-h-0 flex-1 overflow-hidden bg-[#f0f0f0]">
                    <BarHandle />
                    {["orderFront", "orderBack", "orderAbove", "orderUnder"].map((n) => (
                        <ToolButton key={n} name={n} />
                    ))}
                    <div className="mx-0.5 my-[2px] h-px bg-[#bbb]" />
                    <ToolButton name="orderText" />
                    <ToolButton name="orderHatch" />
                </div>
            </div>
            <div className="w-[3px] shrink-0" />
        </main>
    );
}

// Command history sets its Latin parts in a narrower monospace size than the Chinese ones
function HistoryLine({ text }: { text: string }) {
    return (
        <p className="h-[11px] whitespace-pre text-[10px] leading-[11px]">
            {text.split(/([\u4e00-\u9fff]+)/).map((part, i) => (
                <span key={i} className={i % 2 ? "" : "text-[9px]"}>
                    {part}
                </span>
            ))}
        </p>
    );
}

function CommandLine() {
    return (
        <section className="flex shrink-0 border-y-2 border-[#686868] bg-[#8c8c8c] font-['DejaVu_Sans_Mono','Noto_Sans_CJK_SC',monospace] text-[#333]">
            <div className="flex w-[11px] shrink-0 justify-center pt-0.5">
                <span className="h-[3px] w-2 border-y border-[#555]" />
            </div>
            <div className="min-w-0 flex-1">
                <div className="h-[29px] bg-[#c8c8c8] pt-px pl-0.5">
                    <HistoryLine text="指定底面半径或 [内接(I)] <1.5259>:" />
                    <HistoryLine text="指定高度或 [两点(2P)/轴端点(A)/顶面半径(T)] <3.7326>:" />
                </div>
                <label className="flex h-[13px] items-center bg-white pl-0.5 text-[10px] leading-none">
                    命令:
                    <input className="ml-1 h-full min-w-0 flex-1 bg-transparent" />
                </label>
            </div>
        </section>
    );
}

const taskButton = "flex w-[36px] items-center justify-center border-b-2";

function Taskbar() {
    return (
        <footer className="flex h-[29px] shrink-0 items-stretch bg-[#03181e] text-white">
            <button aria-label="开始" className="flex w-[35px] shrink-0 items-center justify-center">
                <svg viewBox="0 0 12 12" className="size-3" fill="#fff">
                    <path d="M0 1.700 5.300 1v4.700H0zM6 .900 12 0v5.700H6zM0 6.300h5.300V11L0 10.300zM6 6.300h6V12l-6-.900z" />
                </svg>
            </button>
            <label className="flex w-[252px] shrink-0 items-center bg-[#f2f2f2] px-1.5">
                <span className="size-[16px] shrink-0 rounded-full border-[3px] border-[#181818]" />
                <input
                    aria-label="搜索"
                    placeholder="在这里输入你要搜索的内容"
                    className="ml-[7px] min-w-0 flex-1 bg-transparent text-[10px] placeholder:text-[#444]"
                />
                <svg viewBox="0 0 10 14" className="mr-1 h-[14px] w-[10px]" fill="none" stroke="#444">
                    <path d="M3.500.500h3v8h-3zM1.500 5v3.500c0 3 7 3 7 0V5M5 11v2.500M3 13.500h4" />
                </svg>
            </label>
            <div className="ml-[3px] flex">
                <button aria-label="浏览器" className={clsx(taskButton, "border-[#76b9ed]")}>
                    <svg viewBox="-10 -10 20 20" className="size-[20px]">
                        {["#e63b2e", "#f08a1d", "#f5d416", "#5fb936", "#2f8de0", "#7a45c4"].map((c, i) => (
                            <path key={c} d="M0 0C-1-5 1-9 4-8.700 8-7 9-3 7.500-.5z" fill={c} transform={`rotate(${i * 60})`} />
                        ))}
                        <circle r="2.200" fill="#fff" />
                    </svg>
                </button>
                <button aria-label="AutoCAD" className={clsx(taskButton, "border-[#76b9ed] bg-[#35464b]")}>
                    <svg viewBox="0 0 18 18" className="size-[18px]">
                        <path d="M1 1h16v16H1z" fill="#eceff1" />
                        <path d="M7 2h4l5 11-4 1-2-3H6l-1 3-3-1z" fill="#c3211b" />
                        <path d="m9 5 1 4H7z" fill="#6e0c0a" />
                        <path d="M2 14.500h14V17H2z" fill="#39424a" />
                    </svg>
                </button>
                <button aria-label="画图" className={clsx(taskButton, "border-[#76b9ed]")}>
                    <svg viewBox="0 0 18 18" className="size-[18px]">
                        <path d="M2 10c0-6 12-8 13-3 .500 3-4 2-4 4s1 5-3 5-6-3-6-6z" fill="#b9dbf2" stroke="#5c8db4" />
                        <circle cx="5" cy="10" r="1.300" fill="#d8432b" />
                        <circle cx="8" cy="7" r="1.300" fill="#5ea744" />
                        <path d="m9 11 7-9 1 1-6 10z" fill="#e19a3c" />
                        <circle cx="7" cy="13" r="1.300" fill="#2b5d96" />
                    </svg>
                </button>
                <button aria-label="视频" className={clsx(taskButton, "border-[#76b9ed]")}>
                    <svg viewBox="0 0 18 18" className="size-[18px]" fill="#fff">
                        <path d="M1 7.500h16V17H1zM1 5l15.500-4 .500 2.500L2 7z" />
                        <path d="m4 4.300 2 2M8 3.300l2 2M12 2.200l2 2M4 7.500v3M8 7.500v3M12 7.500v3M1 10.500h16" stroke="#03181e" />
                    </svg>
                </button>
            </div>
            <div className="ml-auto flex items-center gap-[6px] text-[10px] leading-none">
                <Chevron className="mr-[3px] rotate-180 scale-125" />
                <svg viewBox="0 0 14 10" className="h-[9px] w-[12px]" fill="none" stroke="#fff">
                    <path d="M5 3.500h7v4H5zM13 4.500v2M1 1v3h3V1M2.500 4v4H5" strokeWidth="1.300" />
                    <path d="M6 4h5v3H6z" fill="#fff" />
                </svg>
                <svg viewBox="0 0 12 12" className="size-[11px]" fill="none" stroke="#ddd">
                    <path d="M1 11C1 5 5 1 11 1M3.500 11c0-4 3-7.500 7.500-7.500M6 11c0-3 2-5 5-5M8.500 11c0-1.500 1-2.500 2.500-2.500" />
                </svg>
                <svg viewBox="0 0 14 12" className="h-[11px] w-[13px]" fill="none" stroke="#fff">
                    <path d="M1 4h2l3-3v10L3 8H1zM8 4c1 1 1 3 0 4M10 2.500c2 2 2 5 0 7M12 1c3 3 3 7 0 10" />
                </svg>
                <span>中</span>
                <span className="ml-[3px] flex size-[11px] items-center justify-center bg-white font-bold text-black">M</span>
                <div className="flex h-full items-center">
                    <div className="w-[56px] text-center text-[9px] leading-[14px]">
                        <div>10:34</div>
                        <div>2019/1/6</div>
                    </div>
                    <span className="h-full w-[3px] border-l border-[#33464c]" />
                </div>
            </div>
        </footer>
    );
}

interface Item {
    label: string;
    icon?: string;
    more?: boolean;
    active?: boolean;
}

const contextMenu: Item[][] = [
    [
        { label: "特性(P)", icon: "properties" },
        { label: "特性匹配(M)", icon: "matchProps" },
        { label: "更改为 ByLayer(B)", icon: "toByLayer" },
        { label: "对象(O)", more: true },
        { label: "剪裁(C)", more: true },
    ],
    [{ label: "注释性对象比例(O)", more: true }],
    [
        { label: "删除(E)", icon: "erase" },
        { label: "复制(Y)", icon: "copy" },
        { label: "镜像(I)", icon: "mirror" },
        { label: "偏移(S)", icon: "offset" },
        { label: "阵列", more: true },
        { label: "删除重复对象", icon: "dedupe" },
    ],
    [
        { label: "移动(V)", icon: "move" },
        { label: "旋转(R)", icon: "rotate" },
        { label: "缩放(L)", icon: "scale" },
        { label: "拉伸(H)", icon: "stretch" },
        { label: "拉长(G)", icon: "lengthen" },
    ],
    [
        { label: "修剪(T)", icon: "trim" },
        { label: "延伸(D)", icon: "extend" },
        { label: "打断(K)", icon: "breakLine" },
        { label: "合并(J)", icon: "join" },
        { label: "倒角(C)", icon: "chamfer" },
        { label: "圆角(F)", icon: "fillet" },
        { label: "光顺曲线", icon: "blend" },
    ],
    [
        { label: "三维操作(3)", more: true },
        { label: "实体编辑(N)", more: true, active: true },
        { label: "曲面编辑(F)", more: true },
        { label: "网格编辑(M)", more: true },
    ],
    [
        { label: "更改空间(S)", icon: "changeSpace" },
        { label: "分解(X)", icon: "explode" },
    ],
];

const solidMenu: Item[][] = [
    [
        { label: "并集(U)", icon: "union" },
        { label: "差集(S)", icon: "subtract" },
        { label: "交集(I)", icon: "intersect" },
    ],
    [
        { label: "压印边(I)", icon: "imprint" },
        { label: "圆角边(F)", icon: "filletEdge" },
        { label: "倒角边(C)", icon: "chamferEdge" },
        { label: "着色边(L)", icon: "colorEdge" },
        { label: "复制边(G)", icon: "copyEdge" },
    ],
    [
        { label: "拉伸面(E)", icon: "extrudeFace" },
        { label: "移动面(M)", icon: "moveFace" },
        { label: "偏移面(O)", icon: "offsetFace" },
        { label: "删除面(D)", icon: "deleteFace" },
        { label: "旋转面(A)", icon: "rotateFace" },
        { label: "倾斜面(T)", icon: "taperFace" },
        { label: "着色面(C)", icon: "colorFace" },
        { label: "复制面(F)", icon: "copyFace" },
    ],
    [
        { label: "清除(N)", icon: "clean" },
        { label: "分割(S)", icon: "separate" },
        { label: "抽壳(H)", icon: "shell" },
        { label: "检查(K)", icon: "check" },
    ],
];

function PopupMenu({ groups, className }: { groups: Item[][]; className: string }) {
    return (
        <div
            role="menu"
            className={clsx(
                "absolute flex flex-col border border-[#c4c4c4] bg-[#f1f1f1] py-px text-[9px] leading-none text-[#1a1a1a] shadow-[2px_2px_2px_rgba(0,0,0,0.35)]",
                className
            )}>
            {groups.map((group, i) => (
                <Fragment key={i}>
                    {i > 0 && (
                        <div className="flex h-[5px] shrink-0 items-center pl-[22px] pr-px">
                            <span className="h-px flex-1 bg-[#cfcfcf]" />
                        </div>
                    )}
                    {group.map((item) => (
                        <button
                            key={item.label}
                            role="menuitem"
                            className={clsx(
                                "mr-[3px] ml-px flex min-h-0 flex-1 items-center text-left",
                                item.active ? "bg-[#91c9f7]" : "hover:bg-[#d6eafa]"
                            )}>
                            <span className="flex w-4 shrink-0 justify-center">
                                {item.icon && <Icon name={item.icon} />}
                            </span>
                            <span className="ml-[7px] flex-1 whitespace-nowrap">{item.label}</span>
                            {item.more && <Chevron className="mr-[3px] -rotate-90 text-[#444]" />}
                        </button>
                    ))}
                </Fragment>
            ))}
        </div>
    );
}

function Watermark() {
    return (
        <div className="pointer-events-none absolute right-[54px] bottom-[22px] w-[178px] font-['Open_Sans','Noto_Sans_CJK_SC',sans-serif] text-white/90 [text-shadow:0_0_2px_#777]">
            <div className="flex items-end leading-none">
                <span className="w-[62px] font-['Liberation_Sans',sans-serif] text-[38px] font-bold">Bai</span>
                <div className="relative h-[60px] w-[48px]">
                    <svg
                        viewBox="0 0 48 60"
                        className="absolute inset-0 overflow-visible"
                        fill="#f4f4f4"
                        stroke="#aaa"
                        strokeWidth="0.600">
                        <ellipse cx="5" cy="21" rx="6" ry="8.500" />
                        <ellipse cx="18" cy="9" rx="6" ry="8.500" />
                        <ellipse cx="34" cy="10" rx="6.500" ry="8.500" />
                        <ellipse cx="44" cy="25" rx="6" ry="8" />
                        <path d="M24 23c8 0 10 9 16 14 9 9 5 18-4 18-6 0-8-1-12-1s-6 1-12 1C3 55-1 46 8 37c6-5 8-14 16-14z" />
                    </svg>
                    <span className="absolute bottom-[7px] left-[11px] font-['Liberation_Sans',sans-serif] text-[22px] font-bold leading-none text-[#bdbdbd]">
                        du
                    </span>
                </div>
                <span className="mb-1 ml-[5px] text-[30px] font-bold">经验</span>
            </div>
            <div className="text-[21px] leading-[24px]">jingyan.baidu.com</div>
        </div>
    );
}

export default function App() {
    return (
        <div className="relative flex h-screen w-full flex-col overflow-hidden bg-[#686868] font-['Open_Sans','Noto_Sans_CJK_SC',sans-serif]">
            <AppHeader />
            <Toolbars />
            <Workspace />
            <CommandLine />
            <div className="flex h-4 shrink-0 items-end justify-end bg-gradient-to-b from-[#939393] to-[#757575] p-px">
                <svg viewBox="0 0 9 9" className="size-[8px]" fill="#e2ddc4">
                    <path d="M7 0h2v2H7zM4 3h2v2H4zM7 3h2v2H7zM1 6h2v2H1zM4 6h2v2H4zM7 6h2v2H7z" />
                </svg>
            </div>
            <Taskbar />
            <PopupMenu groups={contextMenu} className="top-[15px] left-[404px] h-[517px] w-[141px]" />
            <PopupMenu groups={solidMenu} className="top-[122px] left-[540px] h-[341px] w-[97px]" />
            <svg
                viewBox="0 0 200 350"
                className="pointer-events-none absolute top-[105px] left-[280px] h-[350px] w-[200px]"
                fill="none"
                stroke="#7c0620"
                strokeLinecap="round"
                strokeLinejoin="round"
                strokeWidth="4">
                <path d="m6 7 171 332M152 321l31 21M175 311l2 29" />
            </svg>
            <Watermark />
        </div>
    );
}
